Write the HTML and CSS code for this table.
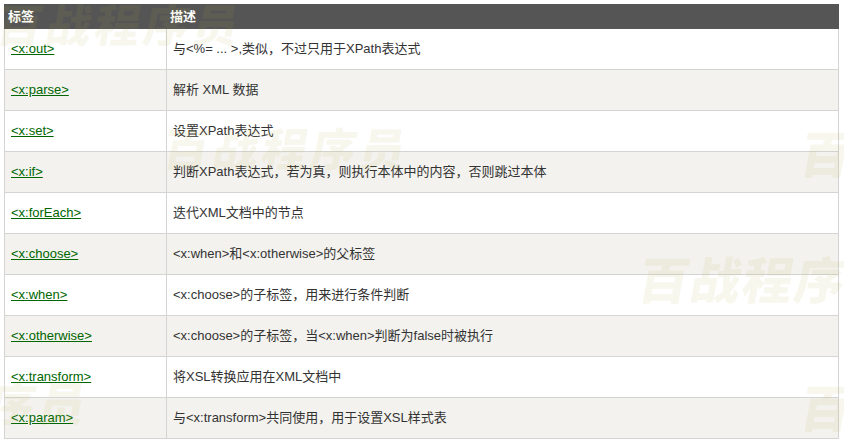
FILE: index.html
```html
<!DOCTYPE html>
<html lang="zh-CN">
<head>
<meta charset="utf-8">
<title>XML 标签</title>
<link rel="stylesheet" href="styles.css">
</head>
<body>
<div class="page">
  <table class="reference">
    <thead>
      <tr><th class="col-tag">标签</th><th>描述</th></tr>
    </thead>
    <tbody>
      <tr><td><a href="#">&lt;x:out&gt;</a></td><td>与&lt;%= ... &gt;,类似，不过只用于XPath表达式</td></tr>
      <tr><td><a href="#">&lt;x:parse&gt;</a></td><td>解析 XML 数据</td></tr>
      <tr><td><a href="#">&lt;x:set&gt;</a></td><td>设置XPath表达式</td></tr>
      <tr><td><a href="#">&lt;x:if&gt;</a></td><td>判断XPath表达式，若为真，则执行本体中的内容，否则跳过本体</td></tr>
      <tr><td><a href="#">&lt;x:forEach&gt;</a></td><td>迭代XML文档中的节点</td></tr>
      <tr><td><a href="#">&lt;x:choose&gt;</a></td><td>&lt;x:when&gt;和&lt;x:otherwise&gt;的父标签</td></tr>
      <tr><td><a href="#">&lt;x:when&gt;</a></td><td>&lt;x:choose&gt;的子标签，用来进行条件判断</td></tr>
      <tr><td><a href="#">&lt;x:otherwise&gt;</a></td><td>&lt;x:choose&gt;的子标签，当&lt;x:when&gt;判断为false时被执行</td></tr>
      <tr><td><a href="#">&lt;x:transform&gt;</a></td><td>将XSL转换应用在XML文档中</td></tr>
      <tr><td><a href="#">&lt;x:param&gt;</a></td><td>与&lt;x:transform&gt;共同使用，用于设置XSL样式表</td></tr>
    </tbody>
  </table>
  <div class="wm-layer" aria-hidden="true">
    <span class="wm wm1">百战程序员</span>
    <span class="wm wm2">百战程序员</span>
    <span class="wm wm3">百战程序员</span>
    <span class="wm wm4">百战程序员</span>
    <span class="wm wm5">百战程序员</span>
    <span class="wm wm6">百战程序员</span>
  </div>
</div>
</body>
</html>
```

FILE: styles.css
```css
html, body {
  margin: 0;
  padding: 0;
  background: #fff;
}
body {
  font-family: "Liberation Sans", Arial, "Noto Sans CJK SC", sans-serif;
  font-size: 13px;
  color: #333;
}
.page {
  position: relative;
  width: 844px;
  height: 443px;
  overflow: hidden;
  padding: 4px;
  box-sizing: border-box;
}
.reference {
  border-collapse: collapse;
  width: 835px;
  table-layout: fixed;
}
.reference th {
  background: #555;
  color: #fff;
  font-weight: bold;
  text-align: left;
  border: 1px solid #555;
  height: 24px;
  padding: 0 3px;
  line-height: 22px;
  box-sizing: border-box;
}
.reference .col-tag {
  width: 162px;
}
.reference td {
  border: 1px solid #d4d4d4;
  height: 41px;
  padding: 0 6px;
  vertical-align: middle;
  line-height: 16px;
  box-sizing: border-box;
}
.reference tbody tr:nth-child(even) td {
  background: #f3f2ee;
}
.reference a {
  color: #006600;
  text-decoration: underline;
}
.wm-layer {
  position: absolute;
  inset: 0;
  pointer-events: none;
}
.wm {
  position: absolute;
  font-family: "Noto Sans CJK SC", sans-serif;
  font-weight: 900;
  font-size: 48px;
  line-height: 1;
  letter-spacing: 2px;
  white-space: nowrap;
  color: rgba(190, 180, 80, 0.10);
  transform: skewX(-10deg);
}
.wm1 { left: -2px; top: 0px; font-size: 45px; letter-spacing: 4px; }
.wm2 { left: 165px; top: 124px; font-size: 45px; letter-spacing: 4px; }
.wm3 { left: 802px; top: 126px; font-size: 50px; }
.wm4 { left: 640px; top: 252px; font-size: 50px; }
.wm5 { left: -160px; top: 378px; font-size: 46px; letter-spacing: 4px; }
.wm6 { left: 802px; top: 380px; font-size: 50px; }
```
